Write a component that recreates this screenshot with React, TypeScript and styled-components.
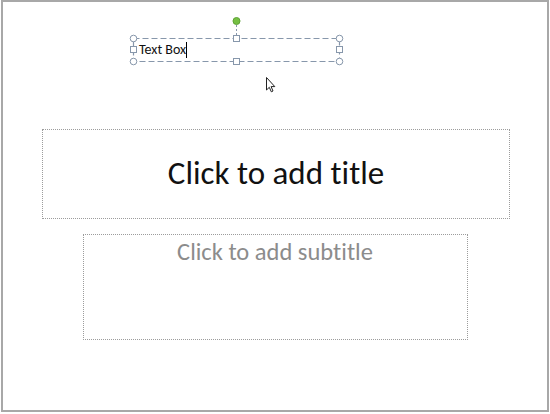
import React from "react";
import styled, { createGlobalStyle } from "styled-components";

const Global = createGlobalStyle`
  html, body { margin: 0; padding: 0; background: #ffffff; }
  body {
    font-family: Carlito, Lato, "Open Sans", sans-serif;
    font-variant-ligatures: none;
    font-feature-settings: "liga" 0, "clig" 0;
  }
`;

const Window = styled.div`
  width: 550px;
  height: 414px;
  background: #ffffff;
  padding: 0 0 0 1px;
  box-sizing: border-box;
`;

const Slide = styled.div`
  position: relative;
  width: 548px;
  height: 412px;
  box-sizing: border-box;
  border: 2px solid #a8a8a8;
  background: #ffffff;
  display: flex;
  flex-direction: column;
  align-items: center;
  padding-top: 127px;
  gap: 15px;
`;

const Placeholder = styled.div<{ $w: number; $h: number; $align: "center" | "top"; $shift?: number }>`
  width: ${(p) => p.$w}px;
  height: ${(p) => p.$h}px;
  box-sizing: border-box;
  flex: none;
  margin-left: ${(p) => p.$shift ?? 0}px;
  border: 1px dotted #9c9c9c;
  display: flex;
  justify-content: center;
  align-items: ${(p) => (p.$align === "center" ? "center" : "flex-start")};
`;

const TitleText = styled.span`
  font-size: 33px;
  color: #111111;
  line-height: 1;
  padding-bottom: 2px;
`;

const SubtitleText = styled.span`
  font-size: 24.5px;
  color: #8c8c8c;
  line-height: 1;
  margin-top: 5px;
`;

const TextBox = styled.div`
  position: absolute;
  left: 130px;
  top: 36px;
  width: 207px;
  height: 24px;
  box-sizing: border-box;
  display: flex;
  align-items: center;
  padding-left: 6px;
`;

const BoxText = styled.span`
  font-size: 14px;
  color: #111;
  line-height: 1;
`;

const Caret = styled.span`
  display: inline-block;
  width: 1px;
  height: 16px;
  background: #000;
`;

const Overlay = styled.svg`
  position: absolute;
  left: -3px;
  top: -2px;
  pointer-events: none;
`;

const handleStroke = "#8797ab";

function Selection() {
  const x1 = 133.5, y1 = 38.5, x2 = 339.5, y2 = 61.5;
  const mx = 236.5, my = 49.5;
  const circles = [
    [x1, y1], [x2, y1], [x1, y2], [x2, y2],
  ];
  const squares = [
    [mx, y1], [mx, y2], [x1, my], [x2, my],
  ];
  return (
    <Overlay width={550} height={414} viewBox="0 0 550 414">
      <rect x={x1} y={y1} width={x2 - x1} height={y2 - y1} fill="none" stroke={handleStroke} strokeWidth={1.2} strokeDasharray="6 3" />
      <line x1={mx} y1={25} x2={mx} y2={35} stroke={handleStroke} strokeWidth={1} strokeDasharray="2 2" />
      <circle cx={mx} cy={21} r={3.5} fill="#76c043" stroke="#5fa336" strokeWidth={1} />
      {circles.map(([cx, cy], i) => (
        <circle key={i} cx={cx} cy={cy} r={3.3} fill="#ffffff" stroke={handleStroke} strokeWidth={1} />
      ))}
      {squares.map(([cx, cy], i) => (
        <rect key={i} x={cx - 3} y={cy - 3} width={6} height={6} fill="#ffffff" stroke={handleStroke} strokeWidth={1} />
      ))}
      <path
        d="M266.5 77.5 L266.5 90 L269.3 87.3 L271.3 91.8 L273 91 L271.1 86.6 L274.8 86.6 Z"
        fill="#ffffff"
        stroke="#222"
        strokeWidth={1}
        strokeLinejoin="round"
      />
    </Overlay>
  );
}

export default function App() {
  return (
    <>
      <Global />
      <Window>
        <Slide>
          <Placeholder $w={468} $h={90} $align="center" $shift={2}>
            <TitleText>Click to add title</TitleText>
          </Placeholder>
          <Placeholder $w={385} $h={106} $align="top">
            <SubtitleText>Click to add subtitle</SubtitleText>
          </Placeholder>
          <TextBox>
            <BoxText>Text Box</BoxText>
            <Caret />
          </TextBox>
          <Selection />
        </Slide>
      </Window>
    </>
  );
}
